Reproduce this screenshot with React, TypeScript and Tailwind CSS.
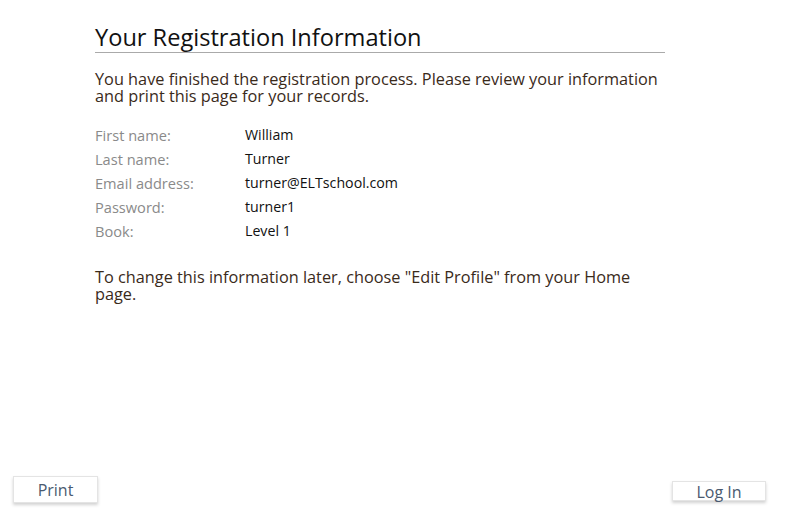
import React from "react";

const rows: [string, string][] = [
  ["First name:", "William"],
  ["Last name:", "Turner"],
  ["Email address:", "turner@ELTschool.com"],
  ["Password:", "turner1"],
  ["Book:", "Level 1"],
];

export default function App() {
  return (
    <div
      className="w-[800px] h-[520px] bg-white flex flex-col"
      style={{ fontFamily: '"Open Sans", sans-serif' }}
    >
      <div className="pl-[95px] pt-[22px] w-[665px] flex-1">
        <h1 className="text-[23.6px] leading-[30px] text-[#111] border-b border-[#aaa]">
          Your Registration Information
        </h1>
        <p className="mt-[18px] text-[16.3px] leading-[17px] text-[#3a2a1a]">
          You have finished the registration process. Please review your information and print this page for your records.
        </p>
        <div className="mt-[18px] flex flex-col leading-[24px]">
          {rows.map(([k, v]) => (
            <div key={k} className="flex">
              <div className="w-[150px] text-[14.6px] text-[#8a8a8a]">{k}</div>
              <div className="text-[14.2px] text-[#111]">{v}</div>
            </div>
          ))}
        </div>
        <p className="mt-[26px] text-[16.3px] leading-[17px] text-[#3a2a1a]">
          To change this information later, choose "Edit Profile" from your Home page.
        </p>
      </div>
      <div className="flex justify-between items-start px-[13px] pb-[17px] pr-[34px]">
        <button className="w-[85px] h-[27px] bg-white border border-[#e4e4e4] shadow-[0_2px_3px_rgba(0,0,0,0.18)] text-[16px] text-[#4a5a70] leading-[20px]">
          Print
        </button>
        <button className="mt-[5px] w-[94px] h-[20px] bg-white border border-[#e4e4e4] shadow-[0_2px_3px_rgba(0,0,0,0.18)] text-[16px] text-[#4a5a70] leading-[20px]">
          Log In
        </button>
      </div>
    </div>
  );
}
